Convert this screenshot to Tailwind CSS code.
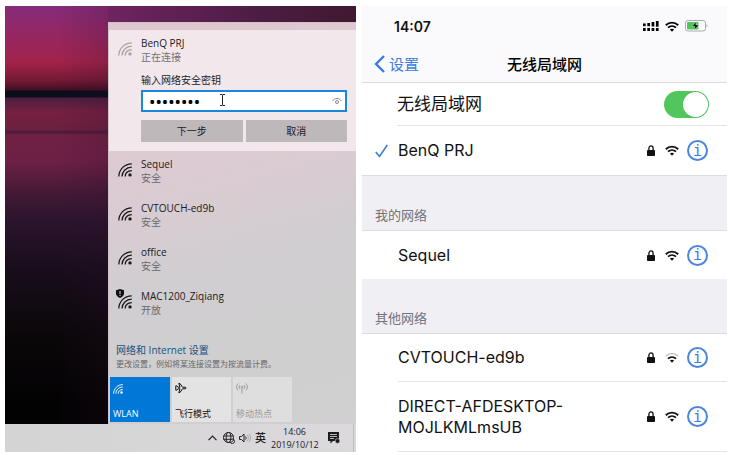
<!DOCTYPE html>
<html lang="zh-CN">
<head>
    <meta charset="UTF-8">
    <meta name="viewport" content="width=device-width, initial-scale=1.0">
    <title>无线局域网</title>
    <script src="https://cdn.jsdelivr.net/npm/@tailwindcss/browser@4"></script>
</head>
<body class="bg-white">
    <!-- Shared icons -->
    <svg class="hidden">
        <symbol id="win-wifi" viewBox="0 0 14 14">
            <g fill="none" stroke="currentColor" stroke-width="1.3">
                <path d="M.8 13.6C1 6.5 6.3 1 13.8.8"/>
                <path d="M4 13.6C4.200 8.200 8 4.300 13.800 4.200"/>
                <path d="M7.200 13.600C7.300 10.200 9.800 7.700 13.800 7.600"/>
            </g>
            <circle cx="12" cy="11.9" r="1.7" fill="currentColor"/>
        </symbol>
        <symbol id="ios-wifi" viewBox="0 0 14 11">
            <path d="M.8 4.2C4.4.7 9.6.7 13.2 4.2" fill="none" stroke="currentColor" stroke-width="1.9"/>
            <path d="M3 6.7C5.3 4.5 8.7 4.5 11 6.7" fill="none" stroke="currentColor" stroke-width="1.8"/>
            <path d="M4.9 8.5C6.1 7.4 7.9 7.4 9.1 8.5L7 10.7Z" fill="currentColor"/>
        </symbol>
        <symbol id="ios-wifi-weak" viewBox="0 0 14 11">
            <path d="M.8 4.2C4.4.7 9.6.7 13.2 4.2" fill="none" stroke="#c4c4c6" stroke-width="1.5"/>
            <path d="M3 6.7C5.3 4.5 8.7 4.5 11 6.7" fill="none" stroke="currentColor" stroke-width="1.8"/>
            <path d="M4.9 8.5C6.1 7.4 7.9 7.4 9.1 8.5L7 10.7Z" fill="currentColor"/>
        </symbol>
        <symbol id="lock" viewBox="0 0 8 11">
            <rect x="0" y="5" width="8" height="6" rx=".8" fill="currentColor"/>
            <path d="M1.900 5.500V3.200a2.100 2.300 0 0 1 4.200 0V5.500" fill="none" stroke="currentColor" stroke-width="1.3"/>
        </symbol>
    </svg>

    <main class="flex items-start gap-[6px] pt-[6px] pl-[5px] pr-[3px]">
        <!-- Windows -->
        <section class="flex-[351] min-w-0 font-['Open_Sans','Noto_Sans_CJK_SC',sans-serif] text-[10px] leading-[14px] text-[#1c1a1c]">
            <div class="flex pt-4 bg-[linear-gradient(to_right,#84297a,#6a235c_35%,#4a1c42_75%,#40192f)]">
                <div class="w-[103px] -mt-4 bg-[linear-gradient(to_right,transparent_50%,#30103030),linear-gradient(to_bottom,#852b79_0px,#98265e_34px,#a2234a_56px,#761a35_74px,#420e20_84px,#0a0d1a_85px,#0a0d1a_91px,#4b1f40_92px,#76203f_106px,#6c2040_124px,#471a38_126px,#702143_129px,#6d2044_155px,#461a35_185px,#2a142d_215px,#190e1c_260px,#0a0709_330px,#030203_400px)]"></div>
                <div class="flex-1 min-w-0 border-l border-t border-[#cfc3c8] bg-[linear-gradient(165deg,#e0c6d0,#dccbd2_35%,#d0ced0_60%,#d0d0d0)]">
                    <form class="mt-[7px] bg-[#f2e8ec] pt-[6px] pb-[9px] pl-[9px] pr-[9px] flex gap-[9px]" onsubmit="return false">
                        <svg class="w-[14px] h-[14px] mt-[6px] shrink-0 text-[#aaa2a6]"><use href="#win-wifi"/></svg>
                        <div class="flex-1 min-w-0">
                            <h2>BenQ PRJ</h2>
                            <p class="text-[#757074]">正在连接</p>
                            <label for="key" class="block mt-[9px] mb-[3px]">输入网络安全密钥</label>
                            <div class="relative">
                                <input id="key" type="password" value="benq1234" class="block w-full h-[22px] border-2 border-[#1a86dc] bg-white pl-[6px] pr-6 font-['Noto_Sans',sans-serif] text-[17px] leading-[18px] text-black outline-none">
                                <button type="button" aria-label="显示密码" class="absolute right-[5px] top-[6px]">
                                    <svg class="w-[10px] h-[10px]" viewBox="0 0 10 10" fill="none" stroke="#8a8a8a"><path d="M.6 5C2.5 1.6 7.5 1.6 9.4 5"/><circle cx="5" cy="6" r="1.5"/></svg>
                                </button>
                                <svg class="absolute left-[78px] top-[4px] w-[7px] h-[12px]" viewBox="0 0 7 12" fill="none" stroke="#222"><path d="M1 .5H3L3.5 1L4 .5H6M3.5 1V11M1 11.5H3L3.5 11L4 11.5H6"/></svg>
                            </div>
                            <div class="flex gap-[3px] mt-2">
                                <button type="submit" class="flex-1 h-[22px] bg-[#bfb8bb]">下一步</button>
                                <button type="button" class="flex-1 h-[22px] bg-[#bfb8bb]">取消</button>
                            </div>
                        </div>
                    </form>

                    <ul class="pt-[6px] pl-[9px]">
                        <li class="flex gap-[9px] h-11">
                            <svg class="w-[14px] h-[14px] mt-[6px]"><use href="#win-wifi"/></svg>
                            <div><h3>Sequel</h3><p class="text-[#6b686a]">安全</p></div>
                        </li>
                        <li class="flex gap-[9px] h-11">
                            <svg class="w-[14px] h-[14px] mt-[6px]"><use href="#win-wifi"/></svg>
                            <div><h3>CVTOUCH-ed9b</h3><p class="text-[#6b686a]">安全</p></div>
                        </li>
                        <li class="flex gap-[9px] h-11">
                            <svg class="w-[14px] h-[14px] mt-[6px]"><use href="#win-wifi"/></svg>
                            <div><h3>office</h3><p class="text-[#6b686a]">安全</p></div>
                        </li>
                        <li class="relative flex gap-[9px] h-11">
                            <svg class="w-[14px] h-[14px] mt-[6px]"><use href="#win-wifi"/></svg>
                            <svg class="absolute -left-[2px] top-0 w-[8px] h-[9px]" viewBox="0 0 8 9"><path d="M4 0L8 1.3V4.5C8 6.8 6 8.2 4 9C2 8.2 0 6.8 0 4.5V1.3Z" fill="#111"/><path d="M4 2V5M4 5.8V7" stroke="#ddd"/></svg>
                            <div><h3>MAC1200_Ziqiang</h3><p class="text-[#6b686a]">开放</p></div>
                        </li>
                    </ul>

                    <div class="pt-[10px] pl-[7px]">
                        <a href="#" class="block text-[#17527f]">网络和 Internet 设置</a>
                        <p class="text-[8px] text-[#6b6869]">更改设置，例如将某连接设置为按流量计费。</p>
                    </div>

                    <div class="flex gap-[2px] mt-[6px] ml-px mb-[2px] text-[9px] leading-[12px]">
                        <button class="flex flex-col items-start justify-between w-[60px] h-[45px] pt-[7px] pb-[2px] px-[3px] bg-[#0078d7] text-white">
                            <svg class="w-[10px] h-[10px]"><use href="#win-wifi"/></svg>WLAN
                        </button>
                        <button class="flex flex-col items-start justify-between w-[59px] h-[45px] pt-[5px] pb-[2px] px-[3px] bg-[#e3e3e3] text-[#111]">
                            <svg class="w-[12px] h-[12px]" viewBox="0 0 12 12" fill="none" stroke="currentColor"><path d="M.8 3.8H1.8L3 5.2H5L3.8 1.500H5L7.500 5.200H10.500Q11.500 6 10.500 6.800H7.500L5 10.500H3.800L5 6.800H3L1.800 8.200H.8V3.800Z"/></svg>飞行模式
                        </button>
                        <button class="flex flex-col items-start justify-between w-[59px] h-[45px] pt-[5px] pb-[2px] px-[3px] bg-[#dedede] text-[#9b9b9b]" disabled>
                            <svg class="w-[12px] h-[12px]" viewBox="0 0 12 12" fill="none" stroke="currentColor"><path d="M6 6V11.5M2.3 1.5C0 3.5 0 6.5 2.3 8.5M9.7 1.5C12 3.5 12 6.5 9.7 8.5M4 3C2.8 4.2 2.8 5.8 4 7M8 3C9.2 4.2 9.2 5.8 8 7"/><circle cx="6" cy="5" r=".8"/></svg>移动热点
                        </button>
                    </div>
                </div>
            </div>

            <!-- Taskbar -->
            <div class="flex items-center justify-end h-7 bg-[linear-gradient(to_right,#d4d4d4,#dcd9dc)] text-[#222]">
                <svg class="w-[9px] h-[6px] mr-[6px]" viewBox="0 0 9 6" fill="none" stroke="currentColor" stroke-width="1.2"><path d="M.5 5.2L4.5 1L8.5 5.2"/></svg>
                <svg class="w-[12px] h-[12px] mr-[4px]" viewBox="0 0 12 12" fill="none" stroke="currentColor"><circle cx="5.5" cy="5.5" r="5"/><ellipse cx="5.5" cy="5.5" rx="2.3" ry="5"/><path d="M.5 4H10.5M.5 7.3H10.5"/><circle cx="9.3" cy="9.3" r="2.2" fill="#dadada"/><path d="M7.9 10.7L10.7 7.9"/></svg>
                <svg class="w-[12px] h-[10px] mr-[4px]" viewBox="0 0 12 10" fill="none" stroke="currentColor"><path d="M.5 3.5H2.5L5 1V9L2.5 6.5H.5Z"/><path d="M6.5 3.5C7.2 4.5 7.2 5.5 6.5 6.5"/><path d="M8.3 2C9.7 4 9.7 6 8.3 8M10 .8C12 3.5 12 6.5 10 9.2" stroke="#aaa"/></svg>
                <span class="text-[11px] font-medium mr-[5px]">英</span>
                <div class="text-center text-[9px] leading-[13px] w-[47px] mr-[9px]">14:06<br>2019/10/12</div>
                <svg class="w-[14px] h-[12px] mr-[12px]" viewBox="0 0 14 12"><path d="M1 0H12V9H6L3.5 11.5V9H1Z" fill="#1c1c1c"/><path d="M3 2.5H10M3 4.5H10M3 6.5H7" stroke="#ddd" stroke-width=".8"/><circle cx="10.5" cy="9" r="2.4" fill="#1c1c1c" stroke="#ddd" stroke-width=".6"/></svg>
                <span class="h-full border-l border-[#bcbcbc] w-[3px]"></span>
            </div>
        </section>

        <!-- iPhone -->
        <section class="flex-[365] min-w-0 font-['Inter','Noto_Sans_CJK_SC',sans-serif] text-[16px] leading-[21px] text-[#111]">
            <header class="bg-[#fafafc] border-b border-[#dcdcde]">
                <div class="flex items-center h-10 pl-8 pr-[19px]">
                    <span class="mr-auto text-[14px] font-semibold">14:07</span>
                    <svg class="w-[16px] h-[10px] mr-[6px]" viewBox="0 0 16 10" fill="#000"><rect x="0" y="2.500" width="2.700" height="2.700"/><rect x="4.300" y="2" width="2.700" height="3.200"/><rect x="8.600" y="1" width="2.700" height="4.500"/><rect x="12.900" y="0" width="2.700" height="5.700"/><path d="M0 7H2.700V10H0ZM4.300 7H7V10H4.300ZM8.600 7H11.300V10H8.600ZM12.900 7H15.600V10H12.900Z"/></svg>
                    <svg class="w-[14px] h-[11px] mr-[6px] text-black"><use href="#ios-wifi"/></svg>
                    <svg class="w-[23px] h-[12px]" viewBox="0 0 23 12"><rect x=".5" y=".5" width="20" height="10.5" rx="2.5" fill="#fff" stroke="#aaa"/><rect x="2" y="2" width="11.5" height="7.5" rx="1" fill="#4fc75c"/><path d="M21.5 4V7.5C22.8 7 22.8 4.5 21.5 4Z" fill="#aaa"/><path d="M11.5 1.5L7 6.5H10L9 10L14 5H10.8Z" fill="#000" stroke="#fff" stroke-width=".4"/></svg>
                </div>
                <nav class="grid grid-cols-[1fr_auto_1fr] items-center h-9 px-3 text-[15px]">
                    <a href="#" class="flex items-center gap-1 text-[#3b7de0]">
                        <svg class="w-[11px] h-[18px]" viewBox="0 0 11 18" fill="none" stroke="#2f78e6" stroke-width="2.3"><path d="M10 1L2 9L10 17"/></svg>设置
                    </a>
                    <h1 class="font-medium text-black">无线局域网</h1>
                </nav>
            </header>

            <div class="pl-[35px]">
                <div class="flex items-center h-[43px] pr-[18px] border-b border-[#e4e4e6]">
                    <label for="wlan" class="mr-auto text-[17px]">无线局域网</label>
                    <input id="wlan" type="checkbox" role="switch" checked class="appearance-none w-[45px] h-[27px] p-px rounded-full bg-[#c8c8c8] checked:bg-[#50c65c] flex checked:justify-end before:w-[25px] before:h-[25px] before:rounded-full before:bg-white">
                </div>
            </div>
            <div class="flex items-center h-[50px] pl-[13px] pr-[19px] border-b border-[#dedee2]">
                <svg class="w-[13px] h-[14px] mr-[10px]" viewBox="0 0 13 14" fill="none" stroke="#3b7de0" stroke-width="1.6"><path d="M.8 8L4.5 12.5L12.3 1"/></svg>
                <span class="mr-auto">BenQ PRJ</span>
                <svg class="w-[8px] h-[11px] mr-[10px]"><use href="#lock"/></svg>
                <svg class="w-[14px] h-[11px] mr-[8px]"><use href="#ios-wifi"/></svg>
                <button aria-label="BenQ PRJ 详情" class="flex items-center justify-center w-[21px] h-[21px] pt-px rounded-full border-2 border-[#4a86e0] text-[#3b7de0] font-['DejaVu_Sans_Mono',monospace] text-[15px]">i</button>
            </div>

            <h2 class="flex items-end h-[55px] pl-[13px] pb-[4px] bg-[#efeff4] border-b border-[#dcdce0] text-[13px] text-[#737378]">我的网络</h2>
            <div class="flex items-center h-12 pl-9 pr-[19px]">
                <span class="mr-auto">Sequel</span>
                <svg class="w-[8px] h-[11px] mr-[10px]"><use href="#lock"/></svg>
                <svg class="w-[14px] h-[11px] mr-[8px]"><use href="#ios-wifi"/></svg>
                <button aria-label="Sequel 详情" class="flex items-center justify-center w-[21px] h-[21px] pt-px rounded-full border-2 border-[#4a86e0] text-[#3b7de0] font-['DejaVu_Sans_Mono',monospace] text-[15px]">i</button>
            </div>

            <h2 class="flex items-end h-[55px] pl-[13px] pb-[4px] bg-[#efeff4] border-b border-[#dcdce0] text-[13px] text-[#737378]">其他网络</h2>
            <ul class="pl-9">
                <li class="flex items-center h-[48px] pr-[19px] border-b border-[#e4e4e6]">
                    <span class="mr-auto">CVTOUCH-ed9b</span>
                    <svg class="w-[8px] h-[11px] mr-[10px]"><use href="#lock"/></svg>
                    <svg class="w-[14px] h-[11px] mr-[8px]"><use href="#ios-wifi-weak"/></svg>
                    <button aria-label="CVTOUCH-ed9b 详情" class="flex items-center justify-center w-[21px] h-[21px] pt-px rounded-full border-2 border-[#4a86e0] text-[#3b7de0] font-['DejaVu_Sans_Mono',monospace] text-[15px]">i</button>
                </li>
                <li class="flex items-center h-[70px] pr-[19px] border-b border-[#e4e4e6]">
                    <span class="mr-auto">DIRECT-AFDESKTOP-<br>MOJLKMLmsUB</span>
                    <svg class="w-[8px] h-[11px] mr-[10px]"><use href="#lock"/></svg>
                    <svg class="w-[14px] h-[11px] mr-[8px]"><use href="#ios-wifi"/></svg>
                    <button aria-label="DIRECT-AFDESKTOP-MOJLKMLmsUB 详情" class="flex items-center justify-center w-[21px] h-[21px] pt-px rounded-full border-2 border-[#4a86e0] text-[#3b7de0] font-['DejaVu_Sans_Mono',monospace] text-[15px]">i</button>
                </li>
            </ul>
        </section>
    </main>
</body>
</html>
